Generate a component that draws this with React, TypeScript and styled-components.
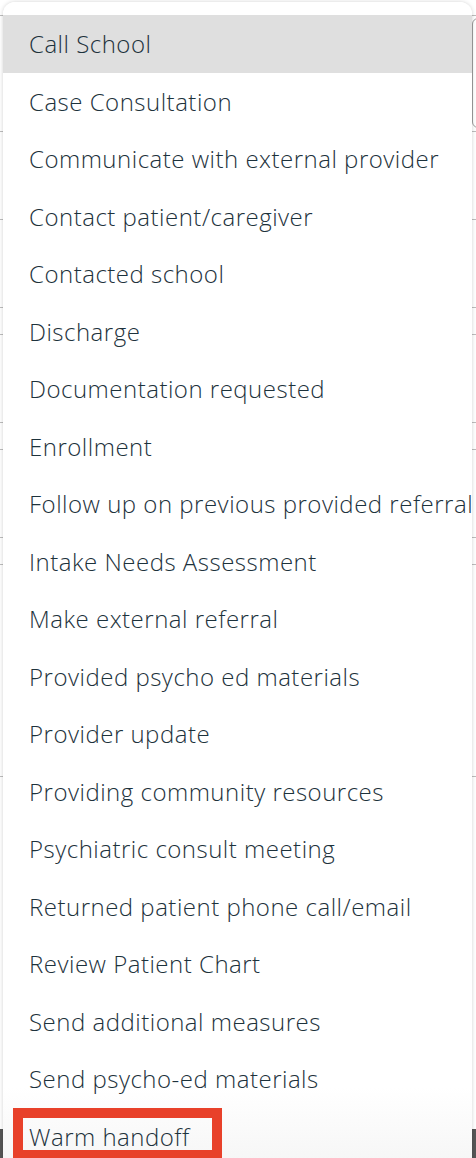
import React from "react";
import styled, { createGlobalStyle } from "styled-components";

const GlobalStyle = createGlobalStyle`
  html, body {
    margin: 0;
    padding: 0;
    width: 476px;
    height: 1158px;
    overflow: hidden;
    background: #ffffff;
  }
  * { box-sizing: border-box; }
`;

const Page = styled.div`
  position: relative;
  width: 476px;
  height: 1158px;
  overflow: hidden;
  background: #ffffff;
  font-family: "Open Sans", Lato, sans-serif;
`;

const Backdrop = styled.div`
  display: flex;
  flex-direction: column;
  height: 100%;
`;

const Spacer = styled.div<{ $h: number }>`
  height: ${(p) => p.$h}px;
  flex: none;
`;

const BackRow = styled.div<{ $h: number }>`
  height: ${(p) => p.$h}px;
  flex: none;
  border-top: 1px solid #bdbdbd;
  display: flex;
  justify-content: flex-end;
  align-items: flex-start;
`;

const Field = styled.div`
  width: 30px;
  height: 110px;
  margin-top: 2px;
  margin-right: -26px;
  border: 1px solid #9e9e9e;
  border-radius: 6px;
`;

const Filler = styled.div`
  flex: 1;
`;

const Footer = styled.div`
  height: 29px;
  flex: none;
  background: #565656;
`;

const Menu = styled.ul`
  position: absolute;
  left: 3px;
  top: 2px;
  width: 469px;
  margin: 0;
  padding: 13px 0 0;
  list-style: none;
  border-radius: 12px 12px 0 0;
  background: linear-gradient(to bottom, #ffffff 0, #ffffff 1085px, #f6f6f6 1160px);
  box-shadow: 0 0 4px rgba(0, 0, 0, 0.18);
`;

const Item = styled.li<{ $active?: boolean }>`
  height: 57.5px;
  display: flex;
  align-items: center;
  padding-left: 26px;
  font-size: 24px;
  font-weight: 300;
  letter-spacing: 0.5px;
  color: #1d323c;
  white-space: nowrap;
  background: ${(p) => (p.$active ? "#dfdfdf" : "transparent")};
`;

const Highlight = styled.div`
  position: absolute;
  left: 13px;
  top: 1108px;
  width: 209px;
  height: 52px;
  border: 10px solid #e8412a;
`;

const items = [
  "Call School",
  "Case Consultation",
  "Communicate with external provider",
  "Contact patient/caregiver",
  "Contacted school",
  "Discharge",
  "Documentation requested",
  "Enrollment",
  "Follow up on previous provided referral",
  "Intake Needs Assessment",
  "Make external referral",
  "Provided psycho ed materials",
  "Provider update",
  "Providing community resources",
  "Psychiatric consult meeting",
  "Returned patient phone call/email",
  "Review Patient Chart",
  "Send additional measures",
  "Send psycho-ed materials",
  "Warm handoff",
];

const rowHeights = [88, 88, 27, 88, 27, 88, 27, 212];

export default function App() {
  return (
    <>
      <GlobalStyle />
      <Page>
        <Backdrop>
          <Spacer $h={15} />
          <BackRow $h={116}>
            <Field />
          </BackRow>
          {rowHeights.map((h, i) => (
            <BackRow key={i} $h={h} />
          ))}
          <BackRow $h={0} />
          <Filler />
          <Footer />
        </Backdrop>
        <Menu>
          {items.map((t, i) => (
            <Item key={t} $active={i === 0}>
              {t}
            </Item>
          ))}
        </Menu>
        <Highlight />
      </Page>
    </>
  );
}
